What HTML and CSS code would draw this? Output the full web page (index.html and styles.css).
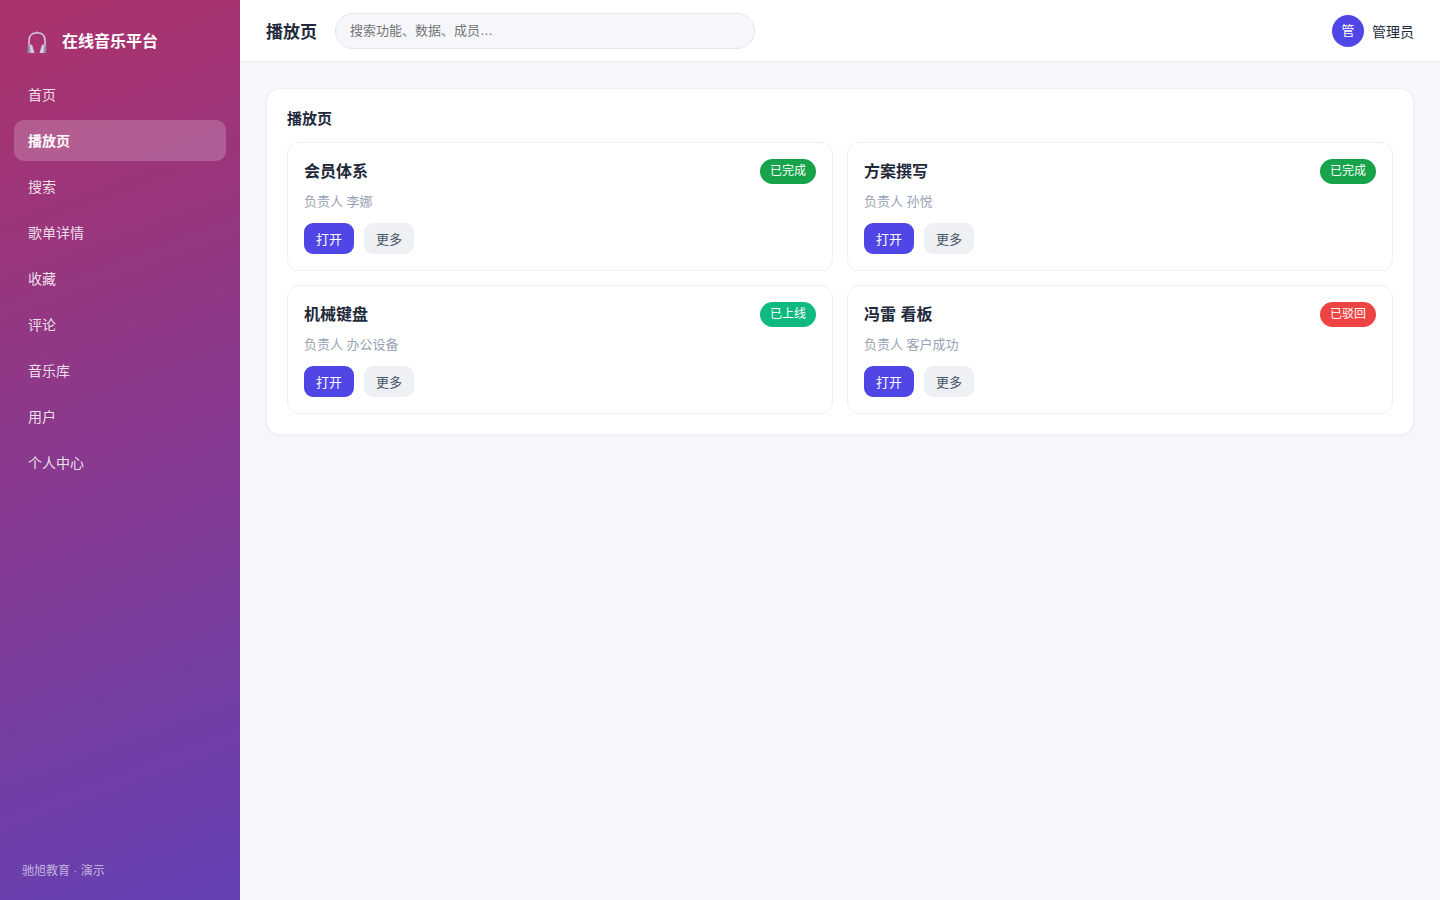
FILE: index.html
```html
<!DOCTYPE html>
<html lang="zh-CN">
<head>
<meta charset="utf-8">
<meta name="viewport" content="width=device-width, initial-scale=1">
<title>播放页 - 在线音乐平台</title>
<link rel="stylesheet" href="styles.css">
</head>
<body>
<div class="app">
  <aside class="sidebar">
    <div class="brand">
      <svg class="brand-icon" viewBox="0 0 20 24" aria-hidden="true">
        <path d="M2 16V10.500C2 5.500 5 2.800 10 2.800s8 2.700 8 7.700V16" fill="none" stroke="#d3c6da" stroke-width="1.600"/>
        <path d="M9.300 1.500h1.400v1.500h-1.400z" fill="#d3c6da"/>
        <path d="M0.500 16.500 2.500 14.500 4 23H0.500z" fill="#9c86a8"/>
        <path d="M2.500 15 5 14.500 7.500 23H3.500z" fill="#d3cbdc"/>
        <path d="M19.500 16.500 17.500 14.500 16 23h3z" fill="#9c86a8"/>
        <path d="M17.500 15 15 14.500 12.500 23h4z" fill="#d3cbdc"/>
      </svg>
      <span>在线音乐平台</span>
    </div>
    <nav class="nav">
      <a class="nav-item" href="#">首页</a>
      <a class="nav-item active" href="#" aria-current="page">播放页</a>
      <a class="nav-item" href="#">搜索</a>
      <a class="nav-item" href="#">歌单详情</a>
      <a class="nav-item" href="#">收藏</a>
      <a class="nav-item" href="#">评论</a>
      <a class="nav-item" href="#">音乐库</a>
      <a class="nav-item" href="#">用户</a>
      <a class="nav-item" href="#">个人中心</a>
    </nav>
    <div class="sidebar-foot">驰旭教育 · 演示</div>
  </aside>
  <div class="main">
    <header class="topbar">
      <h1 class="page-title">播放页</h1>
      <input class="search" type="search" placeholder="搜索功能、数据、成员…" aria-label="搜索">
      <div class="user"><span class="avatar">管</span><span>管理员</span></div>
    </header>
    <main class="content">
      <section class="panel">
        <h2 class="panel-title">播放页</h2>
        <div class="grid">
          <article class="card">
            <div class="card-head"><h3 class="card-title">会员体系</h3><span class="tag done">已完成</span></div>
            <p class="meta">负责人 李娜</p>
            <div class="actions"><button class="btn primary" type="button">打开</button><button class="btn" type="button">更多</button></div>
          </article>
          <article class="card">
            <div class="card-head"><h3 class="card-title">方案撰写</h3><span class="tag done">已完成</span></div>
            <p class="meta">负责人 孙悦</p>
            <div class="actions"><button class="btn primary" type="button">打开</button><button class="btn" type="button">更多</button></div>
          </article>
          <article class="card">
            <div class="card-head"><h3 class="card-title">机械键盘</h3><span class="tag online">已上线</span></div>
            <p class="meta">负责人 办公设备</p>
            <div class="actions"><button class="btn primary" type="button">打开</button><button class="btn" type="button">更多</button></div>
          </article>
          <article class="card">
            <div class="card-head"><h3 class="card-title">冯雷 看板</h3><span class="tag rejected">已驳回</span></div>
            <p class="meta">负责人 客户成功</p>
            <div class="actions"><button class="btn primary" type="button">打开</button><button class="btn" type="button">更多</button></div>
          </article>
        </div>
      </section>
    </main>
  </div>
</div>
</body>
</html>
```
FILE: styles.css
```css
* { box-sizing: border-box; }
body, h1, h2, h3, p { margin: 0; }
body {
  font-family: "Liberation Sans", "Noto Sans CJK SC", sans-serif;
  font-size: 14px;
  color: #1e293b;
  background: #f5f7fb;
}
button, input { font: inherit; }
.app { display: flex; min-height: 100vh; }

.sidebar {
  display: flex;
  flex-direction: column;
  flex: 0 0 240px;
  padding: 20px 14px;
  color: #fff;
  background: linear-gradient(160deg, #ac326a, #6441b4);
}
.brand {
  display: flex;
  align-items: center;
  gap: 15px;
  height: 40px;
  padding: 0 13px;
  margin-bottom: 14px;
  font-size: 16px;
  font-weight: 700;
}
.brand-icon { width: 20px; height: 24px; margin-top: 4px; }
.nav { display: flex; flex-direction: column; gap: 5px; }
.nav-item {
  padding: 11px 14px 9px;
  border-radius: 10px;
  line-height: 21px;
  color: rgba(255, 255, 255, .85);
  text-decoration: none;
}
.nav-item.active { color: #fff; font-weight: 700; background: rgba(255, 255, 255, .2); }
.sidebar-foot {
  margin-top: auto;
  padding: 0 8px;
  font-size: 12px;
  line-height: 18px;
  color: rgba(255, 255, 255, .6);
}

.main { flex: 1; min-width: 0; }
.topbar {
  display: flex;
  align-items: center;
  gap: 18px;
  height: 62px;
  padding: 0 26px;
  background: #fff;
  border-bottom: 1px solid #edeff3;
}
.page-title { font-size: 17px; white-space: nowrap; }
.search {
  flex: 0 1 420px;
  min-width: 0;
  height: 36px;
  padding: 0 14px;
  border: 1px solid #e4e7ee;
  border-radius: 18px;
  background: #f6f7fb;
  font-size: 13px;
  appearance: none;
}
.search::placeholder { color: #757575; }
.user { display: flex; align-items: center; gap: 8px; margin-left: auto; white-space: nowrap; }
.avatar {
  width: 32px;
  height: 32px;
  border-radius: 50%;
  font-size: 13px;
  line-height: 32px;
  text-align: center;
  color: #fff;
  background: #4f46e5;
}

.content { padding: 26px; }
.panel {
  padding: 20px;
  border: 1px solid #eff0f4;
  border-radius: 14px;
  background: #fff;
  box-shadow: 0 1px 3px rgba(30, 41, 59, .04);
}
.panel-title { margin-bottom: 13px; font-size: 15px; line-height: 20px; }
.grid { display: grid; grid-template-columns: repeat(2, minmax(0, 1fr)); gap: 14px; }
.card { padding: 16px; border: 1px solid #eef0f3; border-radius: 12px; }
.card-head { display: flex; align-items: center; justify-content: space-between; }
.card-title { font-size: 16px; line-height: 25px; }
.tag {
  padding: 0 10px;
  border-radius: 13px;
  font-size: 12px;
  line-height: 25px;
  color: #fff;
}
.done { background: #16a34a; }
.online { background: #10b981; }
.rejected { background: #ef4444; }
.meta { margin: 8px 0 12px; font-size: 13px; line-height: 19px; color: #98a2b3; }
.actions { display: flex; gap: 10px; }
.btn {
  height: 31px;
  padding: 0 12px;
  border: 0;
  border-radius: 9px;
  font-size: 13px;
  color: #475569;
  background: #eef0f4;
}
.btn.primary { color: #fff; background: #4f46e5; }
```
